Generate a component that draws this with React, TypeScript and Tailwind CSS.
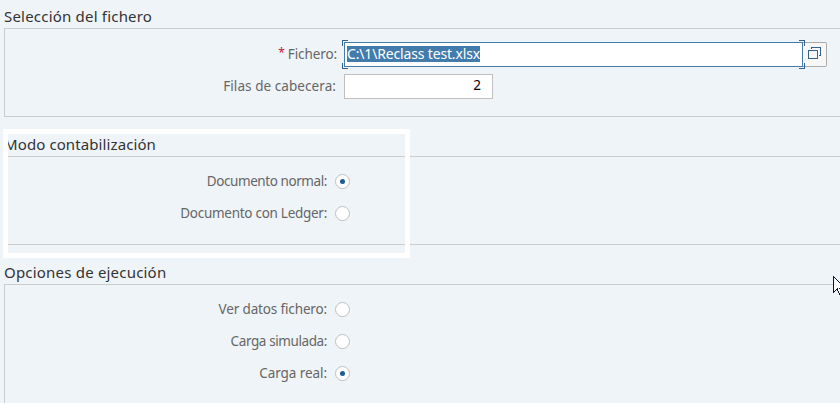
import type { ReactNode } from "react";

const LABEL = "whitespace-nowrap text-[13.5px] leading-8 text-[#666666]";

interface GroupProps {
  title: string;
  spacing: string;
  boxClass: string;
  children: ReactNode;
}

function Group({ title, spacing, boxClass, children }: GroupProps) {
  return (
    <section className="flex w-[860px] shrink-0 flex-col pb-[11px] pl-1">
      <h2 className={`h-7 shrink-0 whitespace-nowrap pt-[5px] text-[15px] leading-[22px] text-[#333333] ${spacing}`}>
        {title}
      </h2>
      <div className={`flex shrink-0 flex-col border border-[#cccccc] ${boxClass}`}>{children}</div>
    </section>
  );
}

function RadioRow({ label, spacing, checked = false }: { label: string; spacing: string; checked?: boolean }) {
  return (
    <div className="flex h-8 shrink-0 items-center">
      <span className={`w-[322px] text-right ${LABEL} ${spacing}`}>{label}</span>
      <span className="ml-2 flex h-[15px] w-[15px] items-center justify-center rounded-full border border-[#bfbfbf] bg-white">
        {checked && <span className="h-[5px] w-[5px] rounded-full bg-[#1f5a94]" />}
      </span>
    </div>
  );
}

function FocusCorners() {
  return (
    <>
      <i className="absolute -left-[3px] -top-[3px] h-[6px] w-[6px] border-l border-t border-[#346187]" />
      <i className="absolute -bottom-[3px] -left-[3px] h-[6px] w-[6px] border-b border-l border-[#346187]" />
      <i className="absolute -right-[3px] -top-[3px] h-[6px] w-[6px] border-r border-t border-[#346187]" />
      <i className="absolute -bottom-[3px] -right-[3px] h-[6px] w-[6px] border-b border-r border-[#346187]" />
    </>
  );
}

export default function App() {
  return (
    <main className="relative flex h-[403px] w-[840px] flex-col overflow-hidden bg-[#eff4f8] font-['Noto_Sans',sans-serif]">
      <Group title="Selección del fichero" spacing="tracking-[0.2px]" boxClass="h-[89px] pt-[9px]">
        <div className="flex h-8 shrink-0 items-center">
          <span className={`w-[332px] text-right ${LABEL} tracking-[-0.1px]`}>
            <span className="relative -top-[2px] mr-[3px] text-[12px] text-[#cc1133]">*</span>Fichero:
          </span>
          <div className="relative z-10 ml-[7px] flex h-[25px] w-[459px] items-center border border-[#427cac] bg-white pl-[2px]">
            <span className="h-4 whitespace-nowrap bg-[#427cac] text-[14px] leading-4 tracking-[-0.16px] text-white">C:\1\Reclass test.xlsx</span>
            <FocusCorners />
          </div>
          <button className="flex h-[25px] w-6 items-center justify-center rounded-r-[2px] border border-l-0 border-[#aaaaaa] bg-[#f7f7f7]">
            <svg width="13" height="13" viewBox="0 0 13 13" fill="none" stroke="#346187" shapeRendering="crispEdges" className="-translate-y-px">
              <path d="M.5 3.5h9v8h-9zM3.5 2V.5h9v8H11" />
            </svg>
          </button>
        </div>
        <div className="flex h-8 shrink-0 items-center">
          <span className={`w-[331px] text-right ${LABEL} tracking-[0.07px]`}>Filas de cabecera:</span>
          <div className="ml-2 flex h-[25px] w-[149px] items-center justify-end border border-[#bfbfbf] bg-white pb-[2px] pr-[11px] text-[13.5px] text-black">2</div>
        </div>
      </Group>
      <Group title="Modo contabilización" spacing="tracking-[0.1px]" boxClass="h-[89px] pt-2">
        <RadioRow label="Documento normal:" spacing="tracking-[-0.42px]" checked />
        <RadioRow label="Documento con Ledger:" spacing="tracking-[-0.28px]" />
      </Group>
      <Group title="Opciones de ejecución" spacing="tracking-[0.2px]" boxClass="h-[121px] pt-2">
        <RadioRow label="Ver datos fichero:" spacing="tracking-[-0.15px]" />
        <RadioRow label="Carga simulada:" spacing="tracking-[-0.4px]" />
        <RadioRow label="Carga real:" spacing="tracking-[-0.07px]" checked />
      </Group>
      <div className="absolute left-[3px] top-[129px] h-[129px] w-[407px] border-[5px] border-white" />
      <svg className="absolute left-[833px] top-[276px]" width="12" height="19" viewBox="0 0 12 19" shapeRendering="crispEdges">
        <path d="M.5.5v16l3.7-3.6 2.4 5.2 2.3-1-2.3-5.1h5z" fill="#fff" stroke="#111122" />
      </svg>
    </main>
  );
}
